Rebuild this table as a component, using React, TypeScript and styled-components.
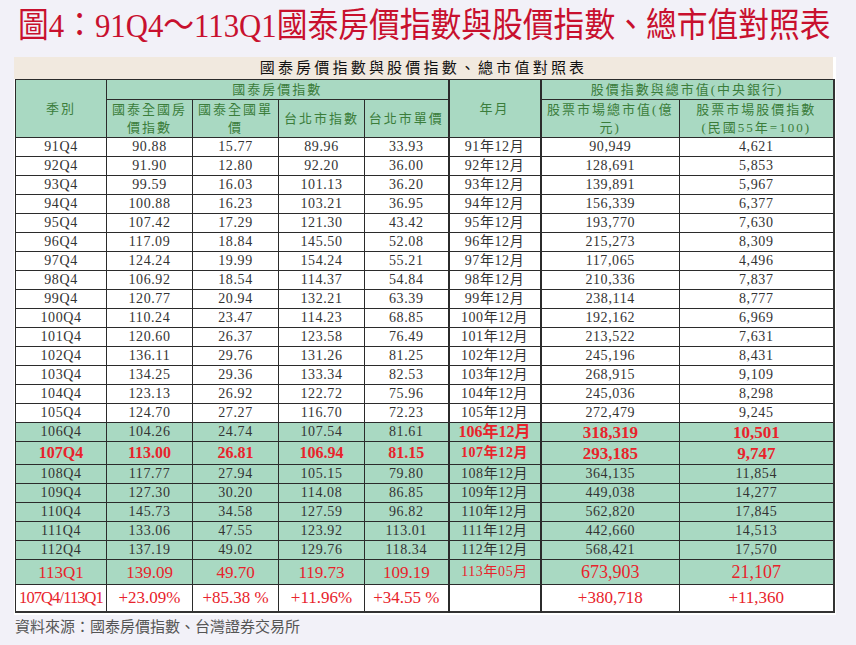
import styled, { createGlobalStyle } from 'styled-components';

const GlobalStyle = createGlobalStyle`
  html, body {
    margin: 0;
    background: #f2f1f8;
  }
`;

const SERIF = `"Liberation Serif", "Noto Sans CJK TC", serif`;

const Page = styled.div`
  width: 856px;
  height: 645px;
  box-sizing: border-box;
  padding: 3px 0 0 14px;
  overflow: hidden;
`;

const Title = styled.h1`
  margin: 0 0 8px 4px;
  font-family: ${SERIF};
  font-size: 34px;
  font-weight: normal;
  line-height: 46px;
  color: #c8102e;
  white-space: nowrap;
  transform: scaleX(0.905);
  transform-origin: left center;
`;

const Sheet = styled.div`
  width: 822px;
  box-sizing: border-box;
  padding: 0 3px 2px 0;
  background: #ffffff;
`;

const Caption = styled.div`
  height: 22px;
  background: #f1e9df;
  font-family: ${SERIF};
  font-size: 15px;
  line-height: 22px;
  letter-spacing: 3.2px;
  text-align: center;
  color: #111;
`;

const Table = styled.table`
  margin-left: 1px;
  width: 818px;
  table-layout: fixed;
  border-collapse: collapse;
  font-family: ${SERIF};
  border-right: 2px solid #333;
  border-bottom: 2px solid #333;
`;

const HeadCell = styled.th<{ $thick?: boolean }>`
  padding: 0;
  background: #a9d9c2;
  border: 1px solid #2b2b2b;
  ${(p) => (p.$thick ? 'border-left: 2px solid #2b2b2b; border-right: 2px solid #2b2b2b;' : '')}
  color: #3b7d3b;
  font-weight: normal;
  font-size: 13px;
  line-height: 18px;
  letter-spacing: 2px;
  text-align: center;
  vertical-align: middle;
  white-space: nowrap;
`;

const Row = styled.tr<{ $green?: boolean; $h: number }>`
  height: ${(p) => p.$h}px;
  background: ${(p) => (p.$green ? '#a9d9c2' : '#ffffff')};

  & > td:nth-child(6) {
    border-left: 2px solid #2b2b2b;
    border-right: 2px solid #2b2b2b;
  }
`;

const Cell = styled.td<{ $red?: boolean; $bold?: boolean; $size?: number; $tight?: boolean }>`
  padding: 0;
  border: 1px solid #2b2b2b;
  text-align: center;
  vertical-align: middle;
  white-space: nowrap;
  overflow: hidden;
  color: ${(p) => (p.$red ? '#e8232b' : '#333333')};
  font-weight: ${(p) => (p.$bold ? 'bold' : 'normal')};
  font-size: ${(p) => p.$size ?? 14}px;
  line-height: 1;
  letter-spacing: ${(p) => (p.$tight ? '-0.9px' : (p.$size ?? 14) > 14 ? '0' : '0.6px')};
`;

const Source = styled.div`
  margin-top: 1px;
  padding-left: 1px;
  font-family: "Noto Sans CJK TC", "Noto Sans", sans-serif;
  font-size: 15px;
  line-height: 20px;
  color: #555555;
`;

type Look = { red?: boolean; bold?: boolean; size?: number; tight?: boolean };

type RowData = {
  cells: string[];
  green?: boolean;
  h?: number;
  looks?: Look[];
};

const plain: string[][] = [
  ['91Q4', '90.88', '15.77', '89.96', '33.93', '91年12月', '90,949', '4,621'],
  ['92Q4', '91.90', '12.80', '92.20', '36.00', '92年12月', '128,691', '5,853'],
  ['93Q4', '99.59', '16.03', '101.13', '36.20', '93年12月', '139,891', '5,967'],
  ['94Q4', '100.88', '16.23', '103.21', '36.95', '94年12月', '156,339', '6,377'],
  ['95Q4', '107.42', '17.29', '121.30', '43.42', '95年12月', '193,770', '7,630'],
  ['96Q4', '117.09', '18.84', '145.50', '52.08', '96年12月', '215,273', '8,309'],
  ['97Q4', '124.24', '19.99', '154.24', '55.21', '97年12月', '117,065', '4,496'],
  ['98Q4', '106.92', '18.54', '114.37', '54.84', '98年12月', '210,336', '7,837'],
  ['99Q4', '120.77', '20.94', '132.21', '63.39', '99年12月', '238,114', '8,777'],
  ['100Q4', '110.24', '23.47', '114.23', '68.85', '100年12月', '192,162', '6,969'],
  ['101Q4', '120.60', '26.37', '123.58', '76.49', '101年12月', '213,522', '7,631'],
  ['102Q4', '136.11', '29.76', '131.26', '81.25', '102年12月', '245,196', '8,431'],
  ['103Q4', '134.25', '29.36', '133.34', '82.53', '103年12月', '268,915', '9,109'],
  ['104Q4', '123.13', '26.92', '122.72', '75.96', '104年12月', '245,036', '8,298'],
  ['105Q4', '124.70', '27.27', '116.70', '72.23', '105年12月', '272,479', '9,245'],
];

const r = (size: number, bold = false): Look => ({ red: true, bold, size });

const rows: RowData[] = [
  ...plain.map((cells) => ({ cells })),
  {
    cells: ['106Q4', '104.26', '24.74', '107.54', '81.61', '106年12月', '318,319', '10,501'],
    green: true,
    looks: [{}, {}, {}, {}, {}, r(16, true), r(17, true), r(17, true)],
  },
  {
    cells: ['107Q4', '113.00', '26.81', '106.94', '81.15', '107年12月', '293,185', '9,747'],
    green: true,
    h: 23,
    looks: [r(16, true), r(16, true), r(16, true), r(16, true), r(16, true), r(14, true), r(17, true), r(17, true)],
  },
  { cells: ['108Q4', '117.77', '27.94', '105.15', '79.80', '108年12月', '364,135', '11,854'], green: true },
  { cells: ['109Q4', '127.30', '30.20', '114.08', '86.85', '109年12月', '449,038', '14,277'], green: true },
  { cells: ['110Q4', '145.73', '34.58', '127.59', '96.82', '110年12月', '562,820', '17,845'], green: true },
  { cells: ['111Q4', '133.06', '47.55', '123.92', '113.01', '111年12月', '442,660', '14,513'], green: true },
  { cells: ['112Q4', '137.19', '49.02', '129.76', '118.34', '112年12月', '568,421', '17,570'], green: true },
  {
    cells: ['113Q1', '139.09', '49.70', '119.73', '109.19', '113年05月', '673,903', '21,107'],
    green: true,
    h: 25,
    looks: [r(17), r(17), r(17), r(17), r(17), r(14), r(18), r(18)],
  },
  {
    cells: ['107Q4/113Q1', '+23.09%', '+85.38 %', '+11.96%', '+34.55 %', '', '+380,718', '+11,360'],
    h: 27,
    looks: [{ ...r(16.5), tight: true }, r(17), r(17), r(17), r(17), r(14), r(17), r(17)],
  },
];

const widths = [91, 86, 86, 86, 84, 92, 139, 154];

export default function App() {
  return (
    <Page>
      <GlobalStyle />
      <Title>圖4：91Q4～113Q1國泰房價指數與股價指數、總市值對照表</Title>
      <Sheet>
        <Caption>國泰房價指數與股價指數、總市值對照表</Caption>
        <Table>
          <colgroup>
            {widths.map((w, i) => (
              <col key={i} style={{ width: w }} />
            ))}
          </colgroup>
          <thead>
            <tr style={{ height: 20 }}>
              <HeadCell rowSpan={2}>季別</HeadCell>
              <HeadCell colSpan={4}>國泰房價指數</HeadCell>
              <HeadCell rowSpan={2} $thick>
                年月
              </HeadCell>
              <HeadCell colSpan={2}>股價指數與總市值(中央銀行)</HeadCell>
            </tr>
            <tr style={{ height: 38 }}>
              <HeadCell>
                國泰全國房
                <br />
                價指數
              </HeadCell>
              <HeadCell>
                國泰全國單
                <br />價
              </HeadCell>
              <HeadCell>台北市指數</HeadCell>
              <HeadCell>台北市單價</HeadCell>
              <HeadCell>
                股票市場總市值(億
                <br />
                元)
              </HeadCell>
              <HeadCell>
                股票市場股價指數
                <br />
                (民國55年=100)
              </HeadCell>
            </tr>
          </thead>
          <tbody>
            {rows.map((row, i) => (
              <Row key={i} $green={row.green} $h={row.h ?? 19}>
                {row.cells.map((c, j) => {
                  const look = row.looks?.[j] ?? {};
                  return (
                    <Cell
                      key={j}
                      $red={look.red}
                      $bold={look.bold}
                      $size={look.size}
                      $tight={look.tight}
                    >
                      {c}
                    </Cell>
                  );
                })}
              </Row>
            ))}
          </tbody>
        </Table>
      </Sheet>
      <Source>資料來源：國泰房價指數、台灣證券交易所</Source>
    </Page>
  );
}
